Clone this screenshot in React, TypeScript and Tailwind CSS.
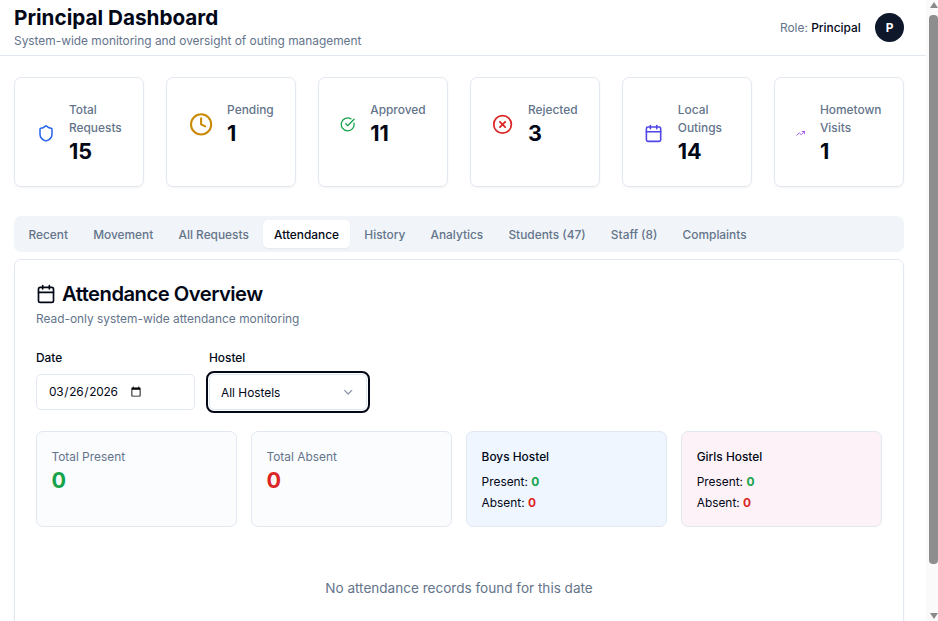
import { Shield, Clock, CircleCheckBig, CircleX, Calendar, TrendingUp, ChevronDown } from "lucide-react";

const stats = [
  { label: "Total Requests", value: "15", Icon: Shield, color: "text-[#2563eb]" },
  { label: "Pending", value: "1", Icon: Clock, color: "text-[#ca8a04]" },
  { label: "Approved", value: "11", Icon: CircleCheckBig, color: "text-[#16a34a]" },
  { label: "Rejected", value: "3", Icon: CircleX, color: "text-[#dc2626]" },
  { label: "Local Outings", value: "14", Icon: Calendar, color: "text-[#4f46e5]" },
  { label: "Hometown Visits", value: "1", Icon: TrendingUp, color: "text-[#9333ea]" },
];

const tabs = ["Recent", "Movement", "All Requests", "Attendance", "History", "Analytics", "Students (47)", "Staff (8)", "Complaints"];

export default function App() {
  return (
    <div className="flex h-[621px] overflow-hidden bg-white text-[#020817] font-['Inter','Liberation_Sans',sans-serif]">
      <div className="w-[926px] shrink-0">
        <header className="flex h-[56px] items-center justify-between border-b border-[#e2e8f0] pl-[14px] pr-[22px]">
          <div className="-mt-[1px]">
            <h1 className="text-[20.7px] font-bold leading-[28px]">Principal Dashboard</h1>
            <p className="text-[11.9px] leading-[18px] text-[#64748b]">System-wide monitoring and oversight of outing management</p>
          </div>
          <div className="flex items-center gap-[14.4px]">
            <span className="text-[11.9px] text-[#64748b]">Role: <span className="font-medium text-[#020817]">Principal</span></span>
            <div className="flex h-[28.8px] w-[28.8px] items-center justify-center rounded-full bg-[#0f172a] text-[11.9px] font-bold text-white">P</div>
          </div>
        </header>
        <main className="pl-[14px] pr-[22px] pt-[21px]">
          <div className="grid grid-cols-6 gap-[21.6px]">
            {stats.map(({ label, value, Icon, color }) => (
              <div key={label} className="h-[110px] rounded-[7px] border border-[#e2e8f0] px-[21.6px] pt-[22.6px] shadow-[0_1px_2px_rgba(0,0,0,0.05)]">
                <div className="flex w-full items-center justify-center gap-[14.4px]">
                  <Icon className={`h-[28.8px] w-[28.8px] min-w-0 ${color}`} />
                  <div>
                    <div className="text-[11.9px] font-medium leading-[18px] text-[#64748b]">{label}</div>
                    <div className="text-[21.6px] font-bold leading-[28.8px]">{value}</div>
                  </div>
                </div>
              </div>
            ))}
          </div>
          <div className="mt-[29px] flex h-[36px] items-center gap-[3.6px] rounded-[7px] bg-[#f1f5f9] px-[3.6px]">
            {tabs.map((t) => (
              <div key={t} className={t === "Attendance" ? "rounded-[5px] bg-white px-[10.8px] pb-[4px] pt-[6px] text-[11.9px] font-medium leading-[18px] shadow-[0_1px_2px_rgba(0,0,0,0.05)]" : "px-[10.8px] pb-[4px] pt-[6px] text-[11.9px] font-medium leading-[18px] text-[#64748b]"}>
                {t}
              </div>
            ))}
          </div>
          <section className="mt-[7px] h-[400px] rounded-[7px] border border-[#e2e8f0] px-[21px] pt-[23px] shadow-[0_1px_2px_rgba(0,0,0,0.05)]">
            <div className="flex items-center gap-[6px]">
              <Calendar className="h-[20px] w-[20px]" />
              <h2 className="text-[20.2px] font-semibold leading-[22px] tracking-[-0.5px]">Attendance Overview</h2>
            </div>
            <p className="mt-[5px] text-[11.9px] leading-[18px] text-[#64748b]">Read-only system-wide attendance monitoring</p>
            <div className="mt-[21px] flex gap-[14.4px]">
              <div className="w-[158.6px]">
                <div className="text-[11.9px] font-medium leading-[18px]">Date</div>
                <input
                  type="date"
                  defaultValue="2026-03-26"
                  className="mt-[7px] h-[36px] w-full rounded-[5px] border border-[#e2e8f0] px-[11px] text-[11.9px] tracking-[-0.3px] outline-none [&::-webkit-calendar-picker-indicator]:mr-[39px]"
                />
              </div>
              <div className="w-[158px]">
                <div className="text-[11.9px] font-medium leading-[18px]">Hostel</div>
                <div className="mt-[7px] flex h-[36px] items-center justify-between rounded-[5px] border border-[#e2e8f0] px-[11px] pt-[1px] text-[11.9px] outline-2 outline-offset-1 outline-[#020817]">
                  <span>All Hostels</span>
                  <ChevronDown className="h-[14.4px] w-[14.4px] text-[#8a94a6]" />
                </div>
              </div>
            </div>
            <div className="mt-[21px] grid grid-cols-4 gap-[14.4px]">
              <div className="h-[96px] rounded-[7px] border border-[#e2e8f0] bg-[#fbfcfe] px-[14.4px] pt-[16px]">
                <div className="text-[11.9px] leading-[18px] text-[#64748b]">Total Present</div>
                <div className="text-[21.6px] font-bold leading-[28.8px] text-[#16a34a]">0</div>
              </div>
              <div className="h-[96px] rounded-[7px] border border-[#e2e8f0] bg-[#fbfcfe] px-[14.4px] pt-[16px]">
                <div className="text-[11.9px] leading-[18px] text-[#64748b]">Total Absent</div>
                <div className="text-[21.6px] font-bold leading-[28.8px] text-[#dc2626]">0</div>
              </div>
              <div className="h-[96px] rounded-[7px] border border-[#e2e8f0] bg-[#eff6ff] px-[14.4px] pt-[16px]">
                <div className="mb-[5px] text-[11.9px] font-medium leading-[18px]">Boys Hostel</div>
                <div className="text-[11.9px] leading-[21px]">Present: <span className="font-bold text-[#16a34a]">0</span></div>
                <div className="text-[11.9px] leading-[21px]">Absent: <span className="font-bold text-[#dc2626]">0</span></div>
              </div>
              <div className="h-[96px] rounded-[7px] border border-[#e2e8f0] bg-[#fdf2f8] px-[14.4px] pt-[16px]">
                <div className="mb-[5px] text-[11.9px] font-medium leading-[18px]">Girls Hostel</div>
                <div className="text-[11.9px] leading-[21px]">Present: <span className="font-bold text-[#16a34a]">0</span></div>
                <div className="text-[11.9px] leading-[21px]">Absent: <span className="font-bold text-[#dc2626]">0</span></div>
              </div>
            </div>
            <p className="mt-[50px] text-center text-[13.55px] leading-[22px] text-[#64748b]">No attendance records found for this date</p>
          </section>
        </main>
      </div>
      <div className="flex w-[12px] shrink-0 flex-col items-end bg-[#fafafa]">
        <div className="mt-[2px] h-0 w-0 border-x-[4.5px] border-b-[6px] border-x-transparent border-b-[#8a8a8a]" />
        <div className="mt-[7px] h-[549px] w-[9px] rounded-[4px] bg-[#8e8e8e]" />
        <div className="mt-auto mb-[2px] h-0 w-0 border-x-[4.5px] border-t-[6px] border-x-transparent border-t-[#8a8a8a]" />
      </div>
    </div>
  );
}
